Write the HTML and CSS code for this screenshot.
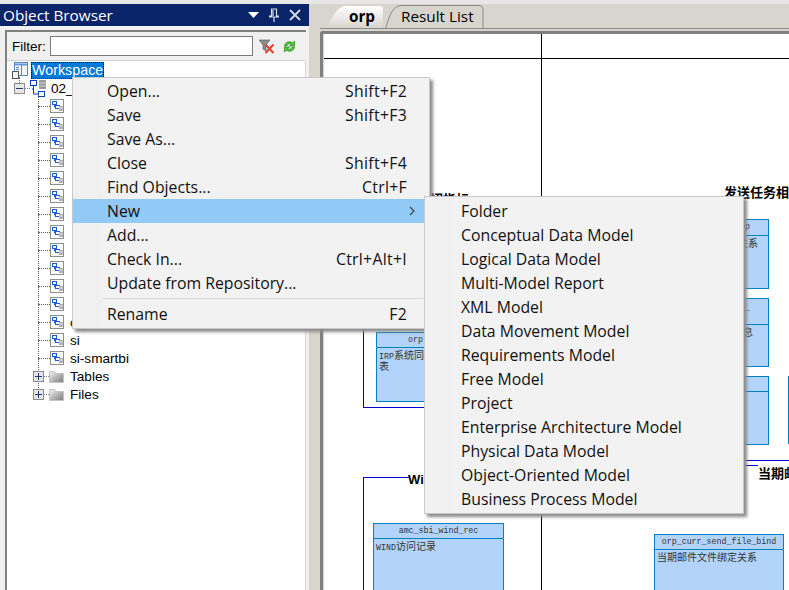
FILE: index.html
```html
<!DOCTYPE html>
<html lang="en">
<head>
    <meta charset="UTF-8">
    <meta name="viewport" content="width=device-width, initial-scale=1.0">
    <title>Object Browser</title>
    <link rel="stylesheet" href="styles.css">
</head>
<body>
    <svg class="icon-defs" width="0" height="0">
        <defs>
            <symbol id="icon-model" viewBox="0 0 14 14">
                <rect x="0.500" y="0.500" width="13" height="13" fill="#fff" stroke="#8f8f8f"/>
                <rect x="2.500" y="2.500" width="4" height="3" fill="#fff" stroke="#1a5ce0"/>
                <rect x="5.500" y="6.500" width="4" height="3" fill="#fff" stroke="#1a5ce0"/>
                <path d="M4.500 6v2h1" fill="none" stroke="#1a5ce0"/>
                <rect x="9" y="7" width="4" height="5" fill="#b0b0b0"/>
                <path d="M9 9h4" stroke="#e4e4e4"/>
            </symbol>
            <symbol id="icon-folder" viewBox="0 0 15 13">
                <defs>
                    <linearGradient id="folder-fill" x1="0" y1="0" x2="1" y2="1">
                        <stop offset="0" stop-color="#f4f4f4"/>
                        <stop offset="1" stop-color="#7a7a7a"/>
                    </linearGradient>
                </defs>
                <path d="M0.500 12.500V1.500h5l1.500 2h7.500v9z" fill="url(#folder-fill)" stroke="#c4c4c4"/>
            </symbol>
        </defs>
    </svg>

    <div class="top-strip"></div>
    <div class="app">
        <aside class="browser">
            <div class="browser-title">
                <span class="browser-name">Object Browser</span>
                <span class="title-tools">
                    <svg width="11" height="7" viewBox="0 0 11 7"><path d="M0 0h11L5.500 6z" fill="#fff"/></svg>
                    <svg width="10" height="14" viewBox="0 0 10 14"><path d="M2.500 1h5v7h2v1H.5V8h2zM4 2v6M5 9v5" fill="none" stroke="#d5dbe8" stroke-width="1.200"/></svg>
                    <svg width="12" height="12" viewBox="0 0 12 12"><path d="M1 1l10 10M11 1L1 11" stroke="#d5dbe8" stroke-width="1.800"/></svg>
                </span>
            </div>
            <div class="browser-body">
                <div class="filter-row">
                    <label class="filter-label" for="filter">Filter:</label>
                    <input class="filter-input" id="filter" type="text">
                    <svg class="filter-icon" width="16" height="15" viewBox="0 0 16 15">
                        <path d="M0 1h11L7 6v6L4 10V6z" fill="#8c8c8c" stroke="#555" stroke-width="0.600"/>
                        <path d="M6.500 5.500l8 8.500M14.500 5.500l-8 8.500" stroke="#e0402c" stroke-width="2"/>
                    </svg>
                    <svg class="filter-icon filter-refresh" width="13" height="15" viewBox="0 0 14 15">
                        <path d="M1.500 7a5.500 5 0 0 1 9-3.500L12.500 1.500V7H7l2-2a3.500 3.500 0 0 0-5 2z" fill="#58c040" stroke="#1f8a14" stroke-width="0.700"/>
                        <path d="M12.500 8a5.500 5 0 0 1-9 3.500L1.500 13.500V8H7l-2 2a3.500 3.500 0 0 0 5-2z" fill="#58c040" stroke="#1f8a14" stroke-width="0.700"/>
                    </svg>
                </div>
                <div class="tree">
                    <div class="tree-row root-row">
                        <svg class="root-icon" width="16" height="17" viewBox="0 0 16 17">
                            <rect x="2.500" y="0.500" width="13" height="13" fill="#f2f7fe" stroke="#5b86c4"/>
                            <path d="M3 2.500h12" stroke="#5b9ae0" stroke-width="2"/>
                            <path d="M9.500 3v10" stroke="#5b86c4"/>
                            <path d="M4 5.500h3M4 7.500h3" stroke="#5b86c4"/>
                            <rect x="0.500" y="9.500" width="6" height="7" fill="#f2f2f2" stroke="#555"/>
                        </svg>
                        <span class="root-label">Workspace</span>
                    </div>
                    <div class="tree-row project-row">
                        <span class="expander root-link"><span class="minus"></span></span>
                        <span class="stub"></span>
                        <svg class="project-icon" width="17" height="17" viewBox="0 0 17 17">
                            <rect x="0.500" y="0.500" width="6" height="5" fill="#fff" stroke="#0f3fc0"/>
                            <rect x="8.500" y="11.500" width="6" height="5" fill="#fff" stroke="#0f3fc0"/>
                            <path d="M3.500 6v8h5M2 9h1.500" fill="none" stroke="#0f3fc0"/>
                            <rect x="9" y="0" width="7" height="9" rx="1" fill="#9a9a9a"/>
                            <path d="M9 3h7M9 6h7" stroke="#d0d0d0"/>
                        </svg>
                        <span class="tree-label">02_</span>
                    </div>
                    <div class="tree-children">
                        <div class="tree-row leaf-row"><span class="leaf-line"></span><svg class="item-icon"><use href="#icon-model"/></svg></div>
                        <div class="tree-row leaf-row"><span class="leaf-line"></span><svg class="item-icon"><use href="#icon-model"/></svg></div>
                        <div class="tree-row leaf-row"><span class="leaf-line"></span><svg class="item-icon"><use href="#icon-model"/></svg></div>
                        <div class="tree-row leaf-row"><span class="leaf-line"></span><svg class="item-icon"><use href="#icon-model"/></svg></div>
                        <div class="tree-row leaf-row"><span class="leaf-line"></span><svg class="item-icon"><use href="#icon-model"/></svg></div>
                        <div class="tree-row leaf-row"><span class="leaf-line"></span><svg class="item-icon"><use href="#icon-model"/></svg></div>
                        <div class="tree-row leaf-row"><span class="leaf-line"></span><svg class="item-icon"><use href="#icon-model"/></svg></div>
                        <div class="tree-row leaf-row"><span class="leaf-line"></span><svg class="item-icon"><use href="#icon-model"/></svg></div>
                        <div class="tree-row leaf-row"><span class="leaf-line"></span><svg class="item-icon"><use href="#icon-model"/></svg></div>
                        <div class="tree-row leaf-row"><span class="leaf-line"></span><svg class="item-icon"><use href="#icon-model"/></svg></div>
                        <div class="tree-row leaf-row"><span class="leaf-line"></span><svg class="item-icon"><use href="#icon-model"/></svg></div>
                        <div class="tree-row leaf-row"><span class="leaf-line"></span><svg class="item-icon"><use href="#icon-model"/></svg></div>
                        <div class="tree-row leaf-row"><span class="leaf-line"></span><svg class="item-icon"><use href="#icon-model"/></svg><span class="tree-label">orp</span></div>
                        <div class="tree-row leaf-row"><span class="leaf-line"></span><svg class="item-icon"><use href="#icon-model"/></svg><span class="tree-label">si</span></div>
                        <div class="tree-row leaf-row"><span class="leaf-line"></span><svg class="item-icon"><use href="#icon-model"/></svg><span class="tree-label">si-smartbi</span></div>
                        <div class="tree-row folder-row"><span class="expander"><span class="plus"></span></span><span class="stub"></span><svg class="folder-icon"><use href="#icon-folder"/></svg><span class="tree-label">Tables</span></div>
                        <div class="tree-row folder-row"><span class="expander"><span class="plus"></span></span><span class="stub"></span><svg class="folder-icon"><use href="#icon-folder"/></svg><span class="tree-label">Files</span></div>
                    </div>
                </div>
            </div>
        </aside>

        <main class="editor">
            <div class="tabs">
                <div class="tab tab-active">
                    <svg class="tab-shape" width="60" height="23" viewBox="0 0 60 23">
                        <defs>
                            <linearGradient id="tab-fill" x1="0" y1="0" x2="0" y2="1">
                                <stop offset="0" stop-color="#ffffff"/>
                                <stop offset="1" stop-color="#d8d5ce"/>
                            </linearGradient>
                        </defs>
                        <path d="M0 23C6 16 11 2 20 1h35q3 0 3 3v19z" fill="url(#tab-fill)"/>
                    </svg>
                    <span class="tab-text">orp</span>
                </div>
                <div class="tab tab-other">
                    <svg class="tab-shape" width="99" height="24" viewBox="0 0 99 24">
                        <path d="M0.500 24C3 16 6 1 16 0.500h78q4 0 4 4V24" fill="none" stroke="#8a8a8a"/>
                    </svg>
                    <span class="tab-text">Result List</span>
                </div>
            </div>
            <div class="canvas-frame">
                <div class="canvas">
                    <div class="grid-v"></div>
                    <div class="grid-h"></div>

                    <div class="group-title group-one">招指标</div>
                    <div class="group-title group-two">发送任务相</div>
                    <div class="group-title group-three">Wind</div>
                    <div class="group-title group-four">当期邮</div>

                    <div class="group-box box-left-a"></div>
                    <div class="group-box box-left-b"></div>
                    <div class="blue-line line-a"></div>
                    <div class="blue-line line-b"></div>
                    <div class="blue-line line-c"></div>

                    <div class="db-table table-irp">
                        <div class="table-head head-left">orp</div>
                        <div class="table-note"><span class="latin">IRP</span>系统同步<br>表</div>
                    </div>
                    <div class="db-table table-wind">
                        <div class="table-head">amc_sbi_wind_rec</div>
                        <div class="table-note"><span class="latin">WIND</span>访问记录</div>
                    </div>
                    <div class="db-table table-bind">
                        <div class="table-head">orp_curr_send_file_bind</div>
                        <div class="table-note">当期邮件文件绑定关系</div>
                    </div>
                    <div class="db-table table-task-a">
                        <div class="table-head head-right head-mid">p</div>
                        <div class="table-note note-right">关系</div>
                    </div>
                    <div class="db-table table-task-b">
                        <div class="table-head head-right head-tall">_</div>
                        <div class="table-note note-right note-b">息</div>
                    </div>
                    <div class="db-table table-task-c">
                        <div class="table-head"></div>
                        <div class="table-note"></div>
                    </div>
                </div>
            </div>
        </main>
    </div>

    <div class="menu menu-main">
        <div class="menu-item"><span>Open...</span><span>Shift+F2</span></div>
        <div class="menu-item"><span>Save</span><span>Shift+F3</span></div>
        <div class="menu-item"><span>Save As...</span></div>
        <div class="menu-item"><span>Close</span><span>Shift+F4</span></div>
        <div class="menu-item"><span>Find Objects...</span><span>Ctrl+F</span></div>
        <div class="menu-item menu-item-active">
            <span>New</span>
            <svg class="menu-arrow" width="6" height="10" viewBox="0 0 6 10"><path d="M1 1l4 4-4 4" fill="none" stroke="#444" stroke-width="1.200"/></svg>
        </div>
        <div class="menu-item"><span>Add...</span></div>
        <div class="menu-item"><span>Check In...</span><span>Ctrl+Alt+I</span></div>
        <div class="menu-item"><span>Update from Repository...</span></div>
        <div class="menu-sep"></div>
        <div class="menu-item"><span>Rename</span><span>F2</span></div>
    </div>

    <div class="menu menu-sub">
        <div class="menu-item">Folder</div>
        <div class="menu-item">Conceptual Data Model</div>
        <div class="menu-item">Logical Data Model</div>
        <div class="menu-item">Multi-Model Report</div>
        <div class="menu-item">XML Model</div>
        <div class="menu-item">Data Movement Model</div>
        <div class="menu-item">Requirements Model</div>
        <div class="menu-item">Free Model</div>
        <div class="menu-item">Project</div>
        <div class="menu-item">Enterprise Architecture Model</div>
        <div class="menu-item">Physical Data Model</div>
        <div class="menu-item">Object-Oriented Model</div>
        <div class="menu-item">Business Process Model</div>
    </div>
</body>
</html>
```

FILE: styles.css
```css
html, body {
    margin: 0;
    height: 100%;
}
body {
    position: relative;
    width: 789px;
    height: 590px;
    overflow: hidden;
    background-color: #d8d5ce;
    font-family: "Liberation Sans", Arial, sans-serif;
    color: #000;
}
.icon-defs {
    position: absolute;
}
.top-strip {
    height: 4px;
    background-color: #e6e6e6;
}
.app {
    display: flex;
    height: 586px;
}

/* object browser */
.browser {
    width: 309px;
    display: flex;
    flex-direction: column;
    background-color: #f0f0f0;
}
.browser-title {
    height: 22px;
    padding: 0 8px 0 3px;
    display: flex;
    align-items: center;
    justify-content: space-between;
    background-color: #0a246a;
    color: #fff;
}
.browser-name {
    font-family: "Open Sans", sans-serif;
    font-size: 15.300px;
}
.title-tools {
    display: flex;
    align-items: center;
    gap: 10px;
}
.browser-body {
    flex: 1;
    margin: 4px 3px 0 5px;
    border-top: 2px solid #808080;
    border-left: 2px solid #808080;
    display: flex;
    flex-direction: column;
}
.filter-row {
    height: 28px;
    padding-left: 5px;
    display: flex;
    align-items: center;
    border-bottom: 1px solid #d0d0d0;
    margin-right: 1px;
}
.filter-label {
    font-size: 13.500px;
    width: 38px;
}
.filter-input {
    width: 201px;
    height: 18px;
    padding: 0;
    border: 1px solid #7a7a7a;
    background-color: #fff;
    outline: none;
}
.filter-icon {
    margin-left: 6px;
}
.filter-refresh {
    margin-left: 8px;
}
.tree {
    flex: 1;
    background-color: #fff;
    border-right: 1px solid #d8d8d8;
    font-size: 13.600px;
}
.tree-row {
    height: 18px;
    display: flex;
    align-items: center;
}
.root-row {
    padding-left: 5px;
}
.root-label {
    margin-left: 3px;
    height: 15px;
    width: 71px;
    line-height: 15px;
    font-size: 14.300px;
    color: #fff;
    background-color: #0078d7;
    border: 1px dotted #000;
}
.project-row {
    padding-left: 7px;
}
.expander {
    width: 9px;
    height: 9px;
    flex: none;
    position: relative;
    border: 1px solid #8a8a8a;
    background-color: #e6e6e6;
}
.root-link::before {
    content: "";
    position: absolute;
    left: 4px;
    top: -7px;
    height: 6px;
    border-left: 1px dotted #606060;
}
.minus::before, .plus::before, .plus::after {
    content: "";
    position: absolute;
    background-color: #22387a;
}
.minus::before, .plus::before {
    left: 1px;
    top: 4px;
    width: 7px;
    height: 1px;
}
.plus::after {
    left: 4px;
    top: 1px;
    width: 1px;
    height: 7px;
}
.stub {
    width: 5px;
    border-top: 1px dotted #808080;
}
.tree-label {
    margin-left: 4px;
}
.tree-children {
    position: relative;
    margin-left: 31px;
}
.tree-children::before {
    content: "";
    position: absolute;
    left: 0;
    top: -3px;
    bottom: 13px;
    border-left: 1px dotted #606060;
}
.leaf-line {
    width: 12px;
    border-top: 1px dotted #606060;
}
.item-icon {
    width: 14px;
    height: 14px;
}
.leaf-row .tree-label {
    margin-left: 6px;
}
.folder-row {
    margin-left: -5px;
}
.folder-row .tree-label {
    margin-left: 6px;
}
.folder-icon {
    width: 15px;
    height: 13px;
}
.root-icon {
    flex: none;
}

/* editor side */
.editor {
    flex: 1;
    min-width: 0;
    display: flex;
    flex-direction: column;
    padding-left: 11px;
}
.tabs {
    height: 24px;
    padding-left: 5px;
    display: flex;
    align-items: flex-end;
    border-bottom: 1px solid #8a8a8a;
}
.tab {
    position: relative;
    height: 23px;
    display: flex;
    align-items: center;
    padding-bottom: 1px;
    box-sizing: border-box;
}
.tab-shape {
    position: absolute;
    left: 0;
    top: 0;
}
.tab-text {
    position: relative;
    font-family: "Open Sans", sans-serif;
    font-size: 15.300px;
}
.tab-active {
    width: 60px;
    justify-content: center;
}
.tab-active .tab-text {
    font-weight: bold;
    margin-left: 14px;
}
.tab-other {
    width: 99px;
    padding-left: 16px;
}
.canvas-frame {
    flex: 1;
    margin-top: 2px;
    border-top: 3px solid #808080;
    border-left: 3px solid #808080;
    border-top-left-radius: 3px;
    min-height: 0;
}
.canvas {
    position: relative;
    height: 100%;
    margin-left: 1px;
    background-color: #fff;
    overflow: hidden;
}
.grid-v {
    position: absolute;
    left: 217px;
    top: 0;
    bottom: 0;
    border-left: 1px solid #000;
}
.grid-h {
    position: absolute;
    left: 0;
    right: 0;
    top: 24px;
    border-top: 1px solid #000;
}
.group-title {
    position: absolute;
    font-size: 13px;
    font-weight: bold;
    line-height: 16px;
    white-space: nowrap;
    font-family: "Liberation Sans", "Noto Sans CJK SC", sans-serif;
}
.group-one { left: 106px; top: 158px; }
.group-two { left: 400px; top: 151px; }
.group-three { left: 84px; top: 438px; }
.group-four { left: 434px; top: 432px; }
.group-box {
    position: absolute;
    border-left: 1px solid #0000d0;
}
.box-left-a {
    left: 39px;
    top: 200px;
    width: 70px;
    height: 173px;
    border-bottom: 1px solid #0000d0;
}
.box-left-b {
    left: 39px;
    top: 443px;
    width: 45px;
    height: 120px;
    border-top: 1px solid #0000d0;
}
.blue-line {
    position: absolute;
    background-color: #0000d0;
}
.line-a { left: 420px; top: 426px; width: 45px; height: 1px; }
.line-b { left: 420px; top: 431px; width: 14px; height: 1px; }
.line-c { left: 464px; top: 342px; width: 1px; height: 68px; background-color: #0080c0; }
.db-table {
    position: absolute;
    box-sizing: border-box;
    background-color: #b3d4fa;
    border: 1px solid #0080c0;
    font-family: "Liberation Mono", "Noto Sans CJK SC", monospace;
    font-size: 8.300px;
    color: #333;
}
.table-head {
    text-align: center;
    border-bottom: 1px solid #0080c0;
    height: 14px;
    line-height: 14px;
}
.head-left {
    text-align: left;
    padding-left: 31px;
}
.head-right {
    text-align: right;
    padding-right: 18px;
}
.head-mid {
    height: 15px;
}
.head-tall {
    height: 25px;
    line-height: 18px;
}
.table-note {
    padding: 3px 2px 0;
    line-height: 11px;
    font-size: 10px;
}
.latin {
    font-size: 8.300px;
}
.note-right {
    text-align: right;
    padding-right: 10px;
}
.note-b {
    padding-right: 15px;
}
.table-irp { left: 52px; top: 298px; width: 110px; height: 70px; }
.table-wind { left: 49px; top: 489px; width: 131px; height: 80px; }
.table-bind { left: 330px; top: 500px; width: 130px; height: 70px; }
.table-task-a { left: 320px; top: 185px; width: 125px; height: 70px; }
.table-task-b { left: 320px; top: 264px; width: 125px; height: 69px; }
.table-task-c { left: 320px; top: 342px; width: 125px; height: 69px; }

/* context menus */
.menu {
    position: absolute;
    box-sizing: border-box;
    padding: 2px 0;
    background: linear-gradient(to right, #f0f0f0 30px, #f2f2f2 30px);
    border: 1px solid #c8c8c8;
    box-shadow: 3px 3px 3px #8c8c8c;
    font-family: "Open Sans", sans-serif;
    font-size: 15.800px;
    color: #111;
}
.menu-main {
    left: 72px;
    top: 77px;
    width: 358px;
    height: 252px;
    padding-top: 1px;
}
.menu-sub {
    left: 424px;
    top: 196px;
    width: 320px;
    height: 318px;
}
.menu-item {
    height: 24px;
    padding: 0 22px 0 34px;
    display: flex;
    align-items: center;
    justify-content: space-between;
}
.menu-item span + span {
    letter-spacing: 0.300px;
}
.menu-sub .menu-item {
    padding-left: 36px;
}
.menu-item-active {
    background-color: #91c9f7;
}
.menu-arrow {
    margin-right: -8px;
}
.menu-sep {
    height: 1px;
    margin: 3px 2px 3px 30px;
    background-color: #d7d7d7;
}
```
